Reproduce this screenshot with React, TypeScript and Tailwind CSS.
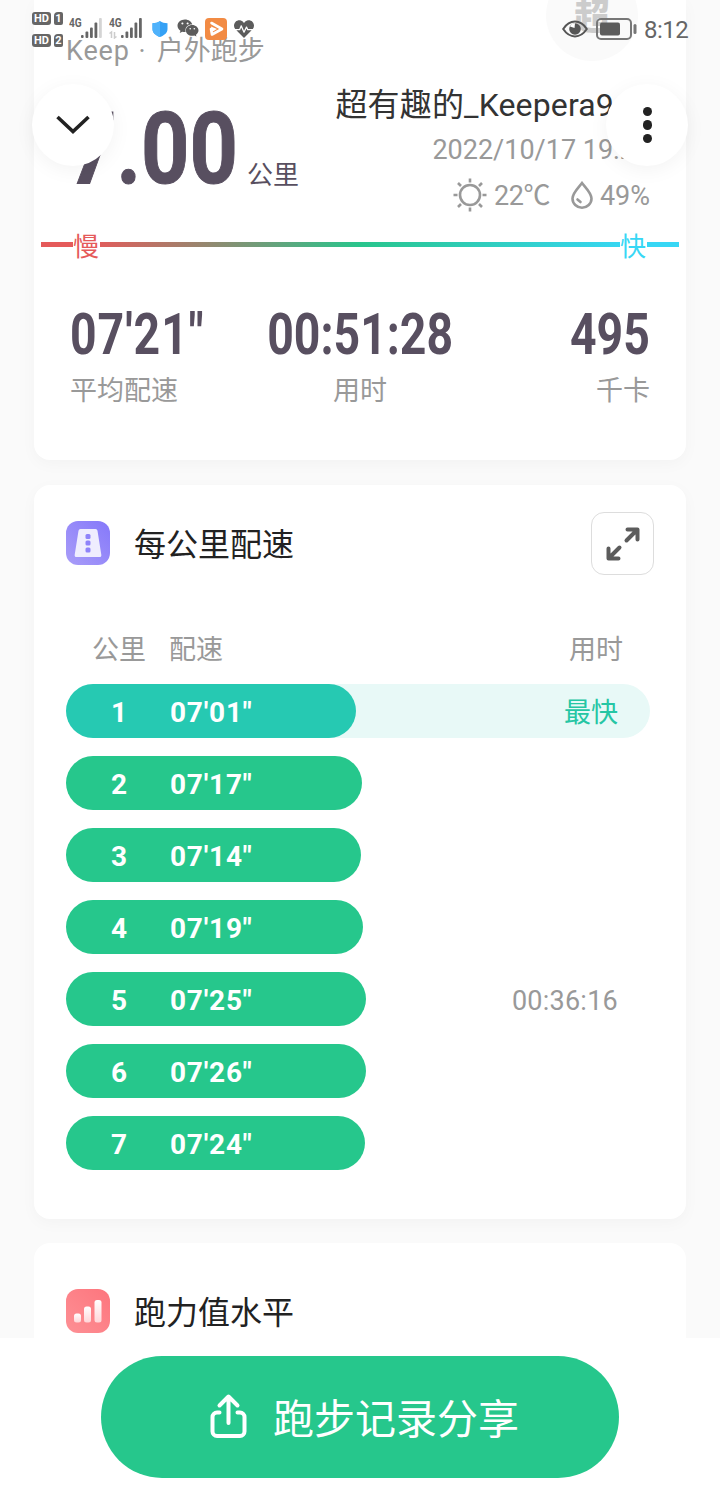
import { ReactNode } from 'react';
import { FaHeartbeat, FaWeixin } from 'react-icons/fa';

interface Split {
	km: number;
	pace: string;
	width: number;
	time?: string;
	fastest?: boolean;
}

const splits: Split[] = [
	{ km: 1, pace: '07\'01"', width: 290, fastest: true },
	{ km: 2, pace: '07\'17"', width: 296 },
	{ km: 3, pace: '07\'14"', width: 295 },
	{ km: 4, pace: '07\'19"', width: 297 },
	{ km: 5, pace: '07\'25"', width: 300, time: '00:36:16' },
	{ km: 6, pace: '07\'26"', width: 300 },
	{ km: 7, pace: '07\'24"', width: 299 },
];

function HdBadge({ sim }: { sim: number }) {
	return (
		<div className="flex h-[13px] gap-[3px] text-[11px] font-bold leading-[13px] text-white">
			<span className="w-[19px] rounded-[3px] bg-[#666] text-center">HD</span>
			<span className="w-[9px] rounded-[2px] rounded-tl-[4px] bg-[#666] text-center">
				{sim}
			</span>
		</div>
	);
}

function Signal({ weak, arrows }: { weak?: boolean; arrows?: boolean }) {
	return (
		<div className="relative h-[22px] w-[34px]">
			<span className="absolute left-0 top-0 origin-left scale-x-[0.78] text-[13px] font-bold leading-[11px] text-[#666]">
				4G
			</span>
			<svg viewBox="0 0 34 22" className="absolute inset-0 h-full w-full" fill="#666">
				<rect x="12" y="18" width="2.6" height="3" rx="1" />
				<rect x="16.5" y="14.5" width="2.8" height="6.5" rx="1" />
				<rect x="21" y="10.5" width="2.8" height="10.5" rx="1" />
				<rect x="25.5" y="5.5" width="2.8" height="15.5" rx="1" />
				<rect
					x="30"
					y="1"
					width="2.8"
					height="20"
					rx="1"
					fill={weak ? '#d4d4d4' : '#666'}
				/>
				{arrows && (
					<path
						d="M0.5 16.500L2.500 15v6M7.500 19.500L5.500 21v-6"
						fill="none"
						stroke="#ccc"
						strokeWidth="1.500"
					/>
				)}
			</svg>
		</div>
	);
}

function StatusBar() {
	return (
		<div className="absolute inset-x-0 top-0 z-20 h-[50px]">
			<div className="flex items-start pl-8">
				<div className="mt-3 flex flex-col gap-[9px]">
					<HdBadge sim={1} />
					<HdBadge sim={2} />
				</div>
				<div className="ml-[6px] mt-[17px] flex gap-[6px]">
					<Signal weak />
					<Signal arrows />
				</div>
				<svg viewBox="0 0 16 16" className="ml-[9px] mt-[21px] h-4 w-4">
					<path
						d="M8 0C10 1.600 12.500 2.200 15.500 2.200V8c0 4-3.500 6.500-7.500 8C4 14.500.5 12 .5 8V2.200C3.500 2.200 6 1.600 8 0z"
						fill="#35a1f5"
					/>
					<path
						d="M8 0C6 1.600 3.500 2.200.5 2.200V8c0 4 3.500 6.500 7.500 8z"
						fill="#4fb2fb"
					/>
				</svg>
				<FaWeixin className="ml-[9px] mt-[17px] h-[22px] w-[22px] text-[#5c5c5c]" />
				<svg viewBox="0 0 22 22" className="ml-[6px] mt-[18px] h-[22px] w-[22px]">
					<rect width="22" height="22" rx="4" fill="#f28b44" />
					<path
						d="M6.500 5L17 11 7 16.500 6 11"
						fill="none"
						stroke="#fff"
						strokeWidth="2.600"
						strokeLinejoin="round"
						strokeLinecap="round"
					/>
					<path d="M6 8.500l6 2.500-5 3z" fill="#fff" />
				</svg>
				<FaHeartbeat className="ml-[7px] mt-[19px] h-5 w-5 text-[#5c5c5c]" />
				<div className="ml-auto mr-8 mt-4 flex items-center">
					<svg viewBox="0 0 26 18" className="h-[18px] w-[26px]">
						<path
							d="M1.200 9C4.500 4 8.500 1.600 13 1.600S21.500 4 24.800 9c-3.300 5-7.300 7.400-11.800 7.400S4.500 14 1.200 9z"
							fill="none"
							stroke="#555"
							strokeWidth="2"
						/>
						<circle cx="13" cy="9" r="5.800" fill="#555" />
						<path d="M8 6.500A5.500 5.500 0 0 1 13 3.200L12.500 8z" fill="#fff" />
					</svg>
					<svg viewBox="0 0 42 22" className="ml-2 h-[22px] w-[42px]">
						<rect
							x="1"
							y="1"
							width="34"
							height="20"
							rx="4"
							fill="none"
							stroke="#777"
							strokeWidth="2"
						/>
						<rect x="4" y="4.500" width="20" height="13" rx="2" fill="#5c5c5c" />
						<rect x="37.500" y="6" width="3" height="10" rx="1.500" fill="#777" />
					</svg>
					<span className="ml-[6px] w-[44px] whitespace-nowrap pt-[2px] text-2xl leading-6 tracking-[-0.5px] text-[#666]">
						8:12
					</span>
				</div>
			</div>
		</div>
	);
}

function Stat({
	value,
	label,
	className,
	origin,
}: {
	value: string;
	label: string;
	className: string;
	origin: string;
}) {
	return (
		<div className={`flex flex-1 flex-col ${className}`}>
			<span
				className={`whitespace-nowrap text-[58px] font-bold leading-[60px] text-[#584f60] ${origin}`}
			>
				{value}
			</span>
			<span className="mt-[9px] text-[27px] leading-9 text-[#999]">{label}</span>
		</div>
	);
}

function Summary() {
	return (
		<section className="relative h-[460px] rounded-b-2xl bg-white pt-8 shadow-[0_4px_16px_rgba(0,0,0,0.03)]">
			<div className="absolute left-[512px] top-[-31px] flex h-[92px] w-[92px] items-center justify-center rounded-full bg-[#fafafa] pt-[5px] text-[36px] font-black leading-9 text-[#ccc]">
				超
			</div>
			<p className="pl-8 pt-px text-[27px] leading-9 text-[#999]">
				<span className="tracking-[0.8px]">Keep</span>
				<span className="ml-[9px] mr-[11px]">·</span>
				户外跑步
			</p>

			<div className="flex h-[151px] justify-between pl-9 pr-9 pt-4">
				<div className="flex">
					<span className="-ml-[2px] mt-[4px] w-[179px] origin-left scale-x-[0.845] whitespace-nowrap text-[100px] font-bold leading-[120px] text-[#584f60] [-webkit-text-stroke:1px_#584f60]">
						7.00
					</span>
					<span className="mt-[72px] text-[26px] leading-9 text-[#584f60]">
						公里
					</span>
				</div>
				<div className="flex flex-col text-[#999]">
					<span className="-ml-[15px] mr-[36px] whitespace-nowrap text-right text-[32px] leading-[40px] tracking-[0.15px] text-[#333]">
						超有趣的_Keepera9
					</span>
					<span className="mt-[7px] whitespace-nowrap text-right text-[27px] leading-9">
						2022/10/17 19:26
					</span>
					<div className="mt-2 flex items-center justify-end text-[27px] leading-9">
						<svg
							viewBox="0 0 34 34"
							className="mr-[7px] h-[34px] w-[34px]"
							fill="none"
							stroke="#999"
							strokeWidth="2.600"
						>
							<circle cx="17" cy="17" r="10" />
							<path d="M17 .5v4M17 29.500v4M.5 17h4M29.500 17h4M5 5l3 3M26 26l3 3M29 5l-3 3M8 26l-3 3" />
						</svg>
						<span className="w-[57px] whitespace-nowrap pt-[2px] tracking-[-0.4px]">
							22℃
						</span>
						<svg
							viewBox="0 0 22 28"
							className="ml-5 mr-[7px] h-7 w-[22px]"
							fill="none"
							stroke="#999"
							strokeWidth="2.600"
							strokeLinecap="round"
						>
							<path d="M11 2C7.500 6.500 1.500 12 1.500 17.500a9.500 9.200 0 0 0 19 0C20.500 12 14.500 6.500 11 2z" />
							<path d="M6.500 18.500l3 2.500" />
						</svg>
						<span className="pt-[2px]">49%</span>
					</div>
				</div>
			</div>

			<div className="mx-[7px] mt-2 flex h-[34px] items-center bg-[linear-gradient(90deg,#e55a5a_8%,#28c58c_50%,#37d7f5_92%)] bg-size-[100%_5px] bg-position-[0_14px] bg-no-repeat text-[26px] leading-[34px]">
				<span className="ml-8 w-[27px] bg-white pt-[3px] text-[#e55a5a]">慢</span>
				<span className="ml-auto mr-8 w-[27px] bg-white pt-[3px] text-[#37d7f5]">
					快
				</span>
			</div>

			<div className="mt-[42px] flex pl-9 pr-9">
				<Stat
					value={'07\'21"'}
					label="平均配速"
					className="items-start"
					origin="origin-left scale-x-[0.8] tracking-[1.2px]"
				/>
				<Stat
					value="00:51:28"
					label="用时"
					className="items-center"
					origin="scale-x-[0.8]"
				/>
				<Stat
					value="495"
					label="千卡"
					className="items-end"
					origin="origin-right scale-x-[0.8]"
				/>
			</div>
		</section>
	);
}

function CardTitle({ icon, text }: { icon: ReactNode; text: string }) {
	return (
		<div className="flex items-start gap-6">
			{icon}
			<h2 className="pt-[2px] text-[32px] leading-[44px] text-[#222]">{text}</h2>
		</div>
	);
}

function RoadIcon() {
	return (
		<svg viewBox="0 0 44 44" className="h-11 w-11">
			<defs>
				<linearGradient id="road" x1="0" y1="1" x2="1" y2="0">
					<stop offset="0" stopColor="#a99df8" />
					<stop offset="1" stopColor="#8578fa" />
				</linearGradient>
			</defs>
			<rect width="44" height="44" rx="12" fill="url(#road)" />
			<path
				d="M14.500 8h15a2 2 0 0 1 2 1.700l3.800 24a2 2 0 0 1-2 2.300H10.700a2 2 0 0 1-2-2.300l3.800-24a2 2 0 0 1 2-1.700z"
				fill="#efedfe"
			/>
			<g fill="#8f83fa">
				<rect x="19.500" y="13" width="5" height="5" rx="1.500" />
				<rect x="19.500" y="19.500" width="5" height="5" rx="1.500" />
				<rect x="19.500" y="26.500" width="5" height="5" rx="1.500" />
			</g>
		</svg>
	);
}

function LevelIcon() {
	return (
		<svg viewBox="0 0 44 44" className="h-11 w-11">
			<defs>
				<linearGradient id="level" x1="0" y1="1" x2="1" y2="0">
					<stop offset="0" stopColor="#fd9095" />
					<stop offset="1" stopColor="#fd757d" />
				</linearGradient>
				<linearGradient id="bars" x1="0" y1="0" x2="0" y2="1">
					<stop offset="0" stopColor="#fff" />
					<stop offset="1" stopColor="#ffd5d8" />
				</linearGradient>
			</defs>
			<rect width="44" height="44" rx="12" fill="url(#level)" />
			<g fill="url(#bars)">
				<rect x="8" y="24.500" width="7" height="9" rx="2.500" />
				<rect x="18" y="17.500" width="7" height="16" rx="2.500" />
				<rect x="28.500" y="11" width="7" height="22.500" rx="2.500" />
			</g>
		</svg>
	);
}

function SplitRow({ km, pace, width, time, fastest }: Split) {
	return (
		<div
			className={`relative flex h-[54px] items-center justify-between rounded-full ${
				fastest ? 'bg-[#e8f9f7]' : ''
			}`}
		>
			<div
				className={`flex h-full items-center rounded-full text-[28px] font-bold leading-[54px] text-white ${
					fastest ? 'bg-[#26c9b2]' : 'bg-[#26c78c]'
				}`}
				style={{ width }}
			>
				<span className="ml-10 w-[26px] pt-[3px] text-center">{km}</span>
				<span className="ml-[38px] pt-[3px] tracking-[0.8px]">{pace}</span>
			</div>
			{fastest && (
				<span className="pr-8 pt-[4px] text-[27px] text-[#26c6a4]">最快</span>
			)}
			{time && (
				<span className="pr-8 pt-[4px] text-[27px] tracking-[0.25px] text-[#999]">
					{time}
				</span>
			)}
		</div>
	);
}

export default function App() {
	return (
		<div className="relative h-[1496px] w-[720px] overflow-hidden bg-[#fafafa] font-[Roboto,'Noto_Sans_CJK_SC',sans-serif]">
			<StatusBar />

			<button className="absolute left-8 top-[84px] z-10 flex h-[82px] w-[82px] items-center justify-center rounded-full bg-white shadow-[0_4px_20px_rgba(0,0,0,0.05)]">
				<svg
					viewBox="0 0 34 20"
					className="h-5 w-[34px]"
					fill="none"
					stroke="#222"
					strokeWidth="3.600"
				>
					<path d="M1.500 2L17 16.500 32.500 2" />
				</svg>
			</button>
			<button className="absolute right-8 top-[84px] z-10 flex h-[82px] w-[82px] flex-col items-center justify-center gap-[4px] rounded-full bg-white pl-px shadow-[0_4px_20px_rgba(0,0,0,0.05)]">
				<span className="h-[9.5px] w-[9.5px] rounded-full bg-[#222]" />
				<span className="h-[9.5px] w-[9.5px] rounded-full bg-[#222]" />
				<span className="h-[9.5px] w-[9.5px] rounded-full bg-[#222]" />
			</button>

			<main className="flex flex-col px-[34px]">
				<Summary />

				<section className="mt-[25px] h-[734px] rounded-2xl bg-white px-8 pt-[27px] shadow-[0_4px_16px_rgba(0,0,0,0.03)]">
					<div className="flex h-[63px] items-center justify-between">
						<CardTitle icon={<RoadIcon />} text="每公里配速" />
						<button className="flex h-[63px] w-[63px] items-center justify-center rounded-[13px] border border-[#ddd]">
							<svg
								viewBox="0 0 36 36"
								className="h-9 w-9"
								fill="none"
								stroke="#5c5c5c"
								strokeWidth="4"
								strokeLinecap="round"
								strokeLinejoin="round"
							>
								<path d="M22.500 3.500H32.500V13.500M31.500 4.500L21.500 14.500M3.500 22.500V32.500H13.500M4.500 31.500L14.500 21.500" />
							</svg>
						</button>
					</div>
					<div className="mt-[57px] flex pl-[26px] pr-[31px] text-[27px] leading-9 text-[#999]">
						<span>公里</span>
						<span className="ml-[23px]">配速</span>
						<span className="ml-auto">用时</span>
					</div>
					<div className="mr-1 mt-4 flex flex-col gap-[18px]">
						{splits.map((split) => (
							<SplitRow key={split.km} {...split} />
						))}
					</div>
				</section>

				<section className="mt-6 h-[240px] rounded-2xl bg-white px-8 pt-[46px]">
					<CardTitle icon={<LevelIcon />} text="跑力值水平" />
				</section>
			</main>

			<div className="absolute inset-x-0 bottom-0 flex h-[158px] justify-center bg-white pt-[18px]">
				<button className="flex h-[122px] w-[518px] items-center rounded-full bg-[#26c78c] text-[41px] text-white">
					<svg
						viewBox="0 0 38 46"
						className="ml-[108px] mt-[-2px] h-[46px] w-[38px]"
						fill="none"
						stroke="#fff"
						strokeWidth="4"
						strokeLinecap="round"
						strokeLinejoin="round"
					>
						<path d="M10.500 19.500H8a4.500 4.500 0 0 0-4.500 4.500v14.500A4.500 4.500 0 0 0 8 43h23a4.500 4.500 0 0 0 4.500-4.500V24a4.500 4.500 0 0 0-4.500-4.500H28.500" />
						<path d="M19.500 30V5M10.500 12.500L19.500 3.500l9 9" />
					</svg>
					<span className="ml-[26px] pt-[8px]">跑步记录分享</span>
				</button>
			</div>
		</div>
	);
}
